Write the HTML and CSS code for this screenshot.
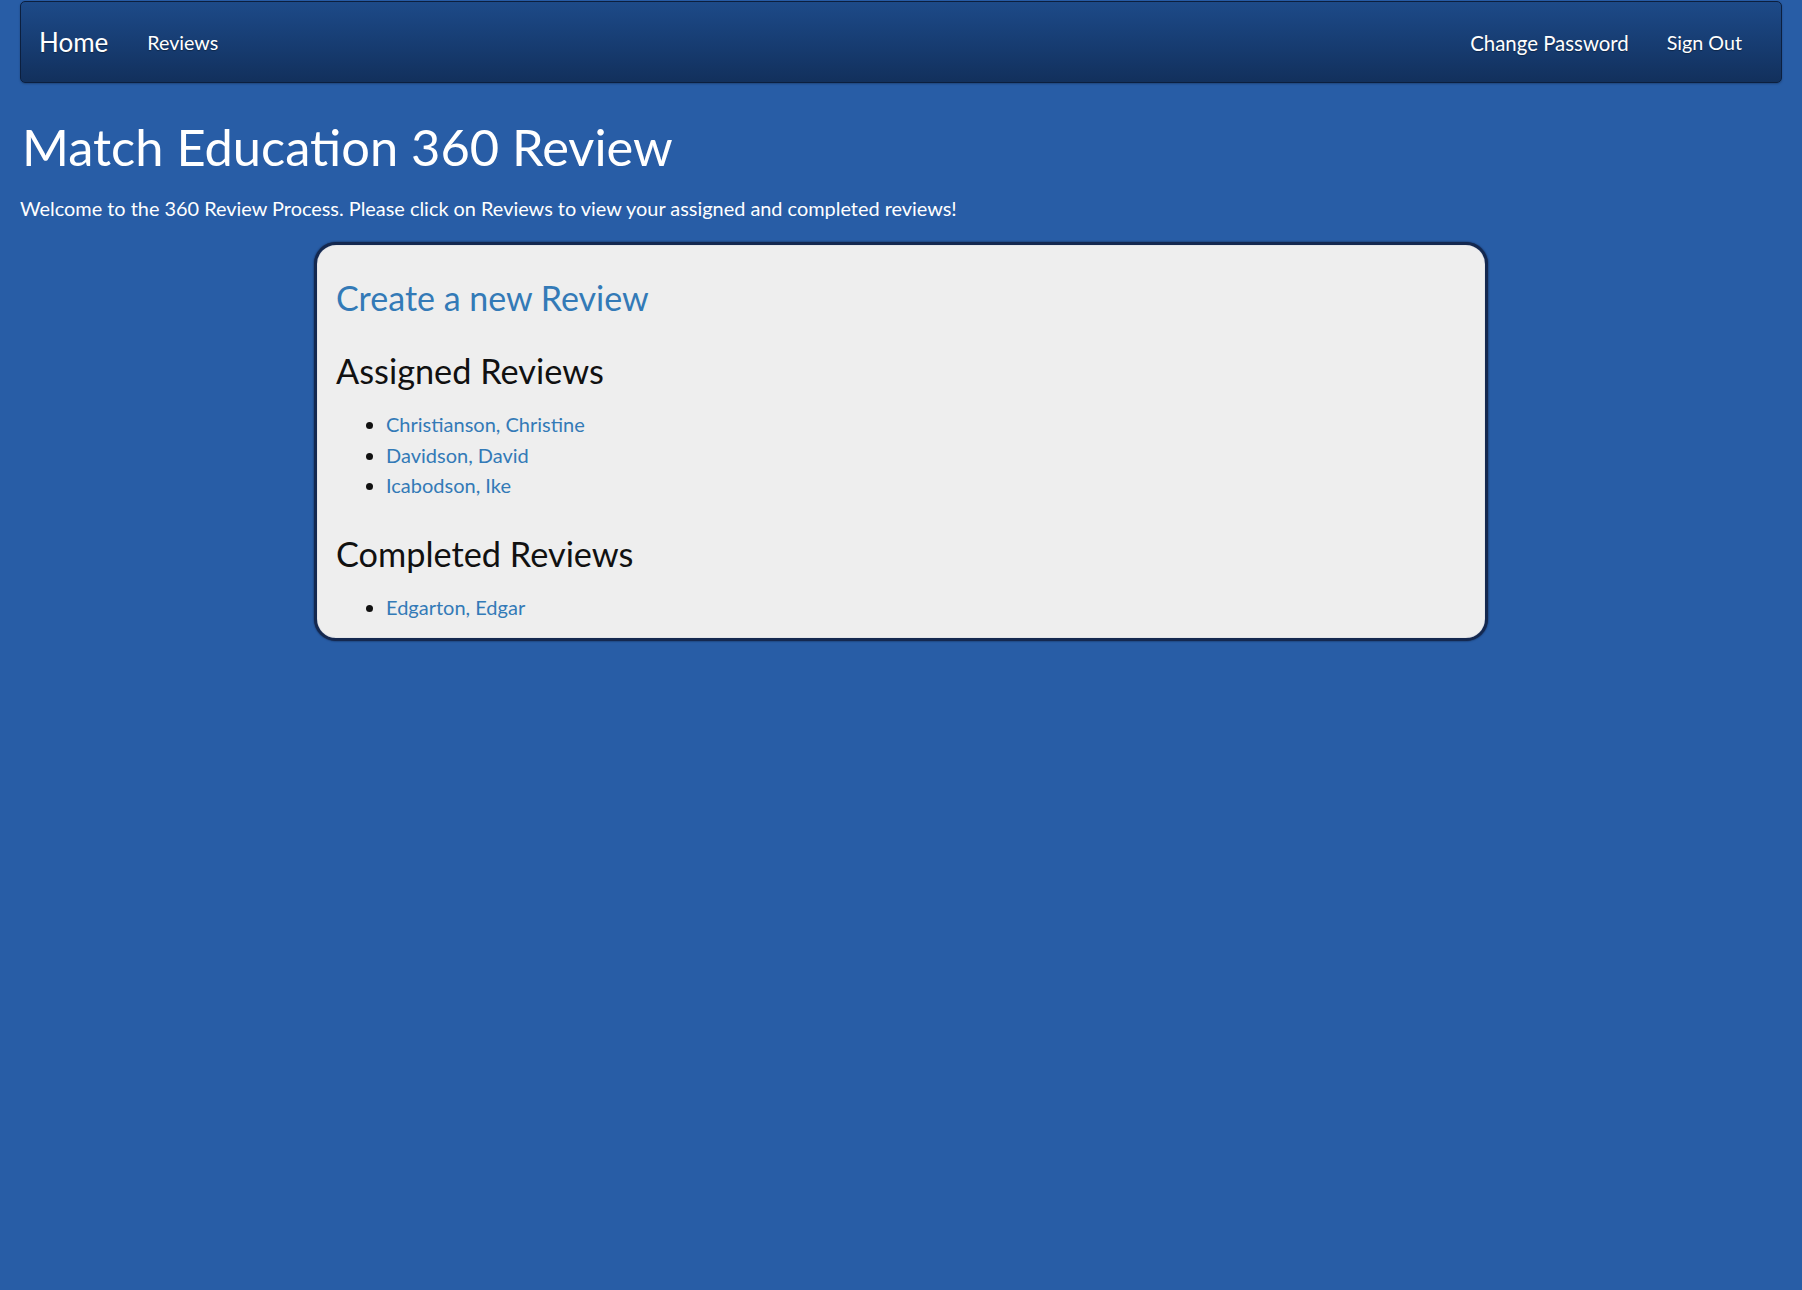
FILE: index.html
```html
<!DOCTYPE html>
<html lang="en">
<head>
<meta charset="utf-8">
<title>Match Education 360 Review</title>
<link rel="stylesheet" href="styles.css">
</head>
<body>
<nav class="navbar">
  <div class="nav-group">
    <a class="brand" href="#">Home</a>
    <a class="nav-link" href="#">Reviews</a>
  </div>
  <div class="nav-group nav-right">
    <a class="nav-link nav-change" href="#">Change Password</a>
    <a class="nav-link" href="#">Sign Out</a>
  </div>
</nav>
<main class="page">
  <h1 class="page-title">Match Education 360 Review</h1>
  <p class="welcome">Welcome to the 360 Review Process. Please click on Reviews to view your assigned and completed reviews!</p>
  <section class="card">
    <h3 class="create"><a href="#">Create a new Review</a></h3>
    <h3 class="section-title">Assigned Reviews</h3>
    <ul class="review-list">
      <li><a href="#">Christianson, Christine</a></li>
      <li><a href="#">Davidson, David</a></li>
      <li><a href="#">Icabodson, Ike</a></li>
    </ul>
    <h3 class="section-title">Completed Reviews</h3>
    <ul class="review-list last">
      <li><a href="#">Edgarton, Edgar</a></li>
    </ul>
  </section>
</main>
</body>
</html>
```
FILE: styles.css
```css
html, body {
  margin: 0;
  padding: 0;
  background: #285da6;
  min-height: 100%;
}

body {
  font-family: Lato, "Liberation Sans", Arial, sans-serif;
  color: #ffffff;
  height: 1290px;
}

a {
  text-decoration: none;
}

.navbar {
  margin: 1px 20px 0 20px;
  box-sizing: border-box;
  height: 82px;
  display: flex;
  align-items: center;
  justify-content: space-between;
  padding: 0 39px 0 18px;
  background: linear-gradient(to bottom, #1d4a88 0%, #173d73 50%, #12305c 100%);
  border: 1px solid #0c1f3e;
  border-radius: 5px;
  box-shadow: 0 1px 2px rgba(0, 0, 0, 0.25);
}

.nav-group {
  display: flex;
  align-items: center;
  gap: 39px;
}

.nav-right {
  gap: 38px;
}

.brand {
  color: #ffffff;
  font-size: 26px;
  line-height: 36px;
  text-shadow: 0 1px 1px rgba(0, 0, 0, 0.35);
}

.nav-link {
  color: #ffffff;
  font-size: 19.7px;
  line-height: 30px;
  padding-top: 2px;
  text-shadow: 0 1px 1px rgba(0, 0, 0, 0.35);
}

.nav-change {
  font-size: 20.4px;
}

.page {
  padding: 0 20px;
}

.page-title {
  margin: 30px 0 0 2px;
  font-size: 50.6px;
  line-height: 67px;
  font-weight: normal;
  color: #ffffff;
}

.welcome {
  margin: 14px 0 0 0;
  font-size: 19.9px;
  line-height: 28px;
}

.card {
  width: 1174px;
  box-sizing: border-box;
  margin: 20px auto 0 auto;
  background: #eeeeee;
  border: 3px solid #14284f;
  border-radius: 22px;
  box-shadow: 0 0 2px rgba(5, 15, 40, 0.8), inset 0 0 1px rgba(120, 140, 180, 0.8);
  padding: 31px 19px 16px 19px;
  color: #111111;
}

.card h3 {
  font-weight: normal;
  font-size: 34.3px;
  line-height: 44px;
  margin: 0;
}

.card .create {
  font-size: 34px;
}

.create a {
  color: #337ab7;
}

.section-title {
  color: #111111;
  margin-top: 29px !important;
}

.section-title + .review-list {
  margin-top: 16px;
}

.review-list {
  margin: 0;
  padding: 0 0 0 50px;
  list-style: disc;
  color: #111111;
}

.review-list li {
  font-size: 20px;
  line-height: 30.5px;
}

.review-list a {
  color: #337ab7;
}

.review-list + .section-title {
  margin-top: 31px !important;
}
```
